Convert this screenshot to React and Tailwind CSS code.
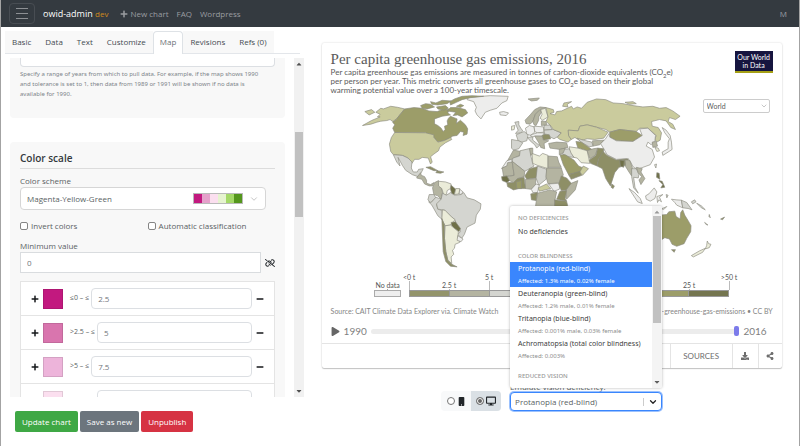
import React from "react";
import { FaPlus, FaMinus, FaDownload, FaShareAlt, FaDesktop, FaMobile, FaPlay, FaCaretUp, FaCaretDown } from "react-icons/fa";
import { FaLinkSlash } from "react-icons/fa6";
import { FiChevronDown } from "react-icons/fi";

const C = {
  none: "#ededec",
  grey: "#d4d5d0",
  stone: "#b4b4a1",
  moss: "#8e8f66",
  dark: "#6f7048",
  olive: "#9c9d69",
  light: "#cacb9d",
  pale: "#ebecd9",
};

const americas = [
  [C.none, "355,25 420,20 474,22 470,35 455,42 440,58 420,64 405,70 392,90 380,78 374,66 378,55 370,38 350,32"],
  [C.light, "162,60 140,55 120,52 98,60 90,58 75,70 88,76 80,84 88,84 62,95 35,110 60,106 78,100 90,97 108,95 118,92 134,104 128,96 136,92"],
  [C.light, "42,68 62,62 72,70 55,78"],
  [C.olive, "162,60 190,56 215,58 235,66 260,68 280,60 296,62 292,72 300,78 275,82 252,90 252,105 262,110 272,118 278,128 284,122 282,112 292,108 290,96 294,88 300,82 320,90 318,104 330,94 345,108 352,120 350,136 338,140 340,130 330,128 320,140 305,142 300,148 282,155 262,160 250,146 240,140 225,132 132,131 126,118 132,108 126,100 136,92"],
  [C.olive, "210,50 225,44 240,46 252,54 230,60 215,58"],
  [C.olive, "240,38 256,42 275,34 302,36 290,44 262,48 244,46"],
  [C.olive, "258,54 285,50 294,58 280,64 262,60"],
  [C.olive, "290,66 300,56 320,56 345,62 352,72 335,84 322,78 308,80 316,70"],
  [C.olive, "300,48 318,40 335,32 360,26 400,22 365,20 335,22 312,30 298,38"],
  [C.olive, "318,52 330,46 340,50 330,56"],
  [C.light, "132,131 225,132 250,138 250,146 262,160 282,155 300,146 304,152 285,162 268,175 264,186 250,196 240,204 245,220 240,226 233,208 215,206 205,212 192,212 184,224 172,208 155,200 128,198 120,188 116,166 122,146"],
  [C.grey, "128,198 155,200 172,208 184,220 182,238 188,250 200,250 204,242 218,240 212,252 202,264 185,258 165,245 155,230 142,206 148,232 138,220"],
  [C.stone, "202,262 210,252 212,260 222,264 228,275 228,284 240,288 250,282 246,292 236,292 222,286 214,272 198,268"],
  [C.moss, "226,236 240,234 262,246 250,246"],
  [C.moss, "260,246 280,250 270,254 256,252"],
  [C.stone, "264,276 252,282 246,298 250,318 262,322 272,332 276,312 274,300 264,292"],
  [C.pale, "264,278 285,280 302,286 300,300 290,306 288,318 280,320 274,300 264,292"],
  [C.dark, "302,290 316,302 312,318 304,316 300,302"],
  [C.pale, "316,300 328,300 326,316 312,318"],
  [C.none, "328,302 338,310 332,318 326,316"],
  [C.grey, "236,318 250,318 256,328 240,342 232,334"],
  [C.grey, "256,326 272,332 270,340 258,348 262,362 274,366 276,394 262,382 244,350 234,340 242,342"],
  [C.grey, "272,332 276,314 288,320 300,312 312,320 332,318 340,312 350,328 372,334 392,346 390,362 378,380 374,404 350,416 342,438 334,450 322,438 330,430 328,420 316,404 314,394 302,385 282,365 262,362 258,346"],
  [C.pale, "276,364 284,366 302,384 314,394 306,402 300,410 284,412 274,392"],
  [C.dark, "302,402 315,400 330,420 326,430 312,420 304,412"],
  [C.pale, "284,412 300,410 324,430 322,446 328,462 314,468 312,480 306,486 310,498 302,506 304,526 292,516 286,490 282,450"],
  [C.none, "322,442 338,452 332,460 320,456"],
  [C.moss, "274,390 282,410 282,450 286,490 292,516 304,528 320,536 300,534 286,520 278,490 276,440"],
  [C.none, "448,70 460,68 475,72 468,80 450,78"],
];

const oldWorld = [
  [C.stone, "75,94 90,78 104,62 120,54 138,56 120,62 106,76 98,98 90,106 78,104"],
  [C.stone, "98,98 106,76 120,62 124,70 116,84 116,94 108,110 102,108"],
  [C.pale, "122,62 136,58 144,84 128,94 120,88 126,76"],
  [C.grey, "44,100 56,98 56,108 62,118 68,126 62,132 46,134 54,124 50,114"],
  [C.pale, "34,112 44,110 42,122 34,124"],
  [C.grey, "48,138 62,132 72,128 84,138 80,156 64,160 54,156"],
  [C.grey, "34,152 56,156 68,162 56,180 40,184 34,178"],
  [C.none, "76,118 88,110 102,114 104,130 92,140 80,136"],
  [C.none, "102,112 130,114 132,130 112,132 104,128"],
  [C.stone, "124,96 138,98 140,108 124,110"],
  [C.grey, "132,110 150,108 156,122 132,124"],
  [C.grey, "132,124 160,122 184,132 172,144 162,150 150,144 134,138"],
  [C.none, "92,138 112,132 132,132 128,142 104,142 94,146"],
  [C.moss, "126,140 136,136 148,138 152,150 130,154"],
  [C.grey, "82,146 98,144 98,154 118,170 110,178 104,168 90,156"],
  [C.stone, "104,142 126,142 130,154 146,156 132,164 134,180 122,176 116,162"],
  [C.stone, "146,164 170,160 200,162 204,176 180,182 150,178"],
  [C.light, "138,56 160,62 162,70 150,74 165,78 170,68 185,66 215,52 220,60 232,54 245,58 262,40 290,30 318,32 340,42 370,44 400,50 430,54 460,52 480,58 500,56 520,66 542,82 528,92 510,86 506,98 520,106 528,122 514,116 500,96 480,92 456,98 458,112 476,116 486,132 482,154 472,160 466,152 470,140 445,118 420,118 410,128 360,122 330,130 318,122 290,115 262,108 240,112 235,126 205,124 206,140 214,152 204,160 180,152 172,146 184,132 160,122 150,108 138,98 144,84"],
  [C.light, "188,52 192,42 215,38 202,46 204,54"],
  [C.stone, "84,30 118,27 112,34 94,36"],
  [C.light, "376,40 400,38 410,44 390,46"],
  [C.light, "205,124 235,126 240,112 262,108 290,115 325,130 312,148 285,152 262,150 240,156 225,146 214,152 206,140"],
  [C.olive, "330,130 360,122 410,128 428,140 400,158 350,156 330,145"],
  [C.none, "328,134 330,145 350,156 400,158 428,140 420,120 445,118 468,140 466,156 455,168 445,160 440,172 458,182 465,205 452,228 430,236 412,242 400,234 392,218 380,210 350,212 322,198 312,180 302,164 316,152"],
  [C.grey, "232,148 250,154 276,160 280,172 268,174 244,160"],
  [C.olive, "228,158 244,160 276,182 262,186 234,178"],
  [C.stone, "278,156 312,154 300,168 280,172"],
  [C.pale, "208,174 234,178 262,186 268,214 270,224 244,222 232,208 222,206 210,190"],
  [C.grey, "190,182 208,180 214,194 222,206 204,204 188,196"],
  [C.stone, "178,182 196,178 190,192 178,198"],
  [C.stone, "262,186 280,180 294,178 286,200 270,210"],
  [C.moss, "268,214 288,200 294,178 312,180 310,196 296,212 292,232 272,224"],
  [C.moss, "310,188 322,200 350,214 368,212 386,210 378,230 358,236 345,252 336,280 332,292 318,270 308,240 292,232 296,212"],
  [C.dark, "360,214 374,216 372,236 362,232"],
  [C.moss, "336,286 344,292 340,300 334,296"],
  [C.olive, "180,198 196,198 222,214 236,232 250,238 242,250 206,258 190,228"],
  [C.moss, "206,258 240,248 246,260 214,272"],
  [C.light, "250,232 266,240 248,260 240,250"],
  [C.stone, "376,214 390,214 398,236 396,262 388,250 378,234"],
  [C.grey, "396,240 410,240 418,258 416,268 402,266 406,296 416,314 402,298 396,264"],
  [C.stone, "410,236 428,240 424,250 436,270 424,288 418,274 426,264 416,252"],
  [C.stone, "40,184 62,188 58,200 34,212 22,216"],
  [C.grey, "60,186 94,178 92,200 98,226 102,232 74,248 36,218 38,208 58,202"],
  [C.stone, "88,180 98,178 98,196 92,200"],
  [C.pale, "96,194 118,202 128,194 144,200 144,240 112,230 98,224"],
  [C.stone, "144,202 172,204 176,220 184,236 144,236"],
  [C.none, "20,216 34,212 36,220 20,232 4,240"],
  [C.stone, "6,238 20,232 22,222 36,220 42,260 10,264"],
  [C.stone, "36,218 74,248 72,264 52,270 40,282 28,276 20,264 42,260"],
  [C.moss, "74,262 88,240 112,234 114,250 108,268 80,272"],
  [C.grey, "112,232 140,242 138,272 116,290 108,268"],
  [C.stone, "140,238 184,238 190,258 180,282 144,286 138,264"],
  [C.stone, "76,272 108,270 106,290 92,302 76,300"],
  [C.dark, "4,264 20,262 28,276 20,282 6,276"],
  [C.moss, "20,282 40,282 52,270 72,266 76,300 56,300 40,304 22,294"],
  [C.olive, "48,280 64,276 64,300 50,300"],
  [C.none, "94,302 108,286 118,290 112,312 98,312"],
  [C.light, "114,298 140,286 152,300 118,308"],
  [C.none, "146,286 180,284 178,302 162,308"],
  [C.moss, "184,262 200,268 216,286 204,304 184,306 176,286"],
  [C.stone, "214,284 234,276 226,304 200,332 196,308"],
  [C.moss, "180,308 200,306 196,330 200,338 170,332"],
  [C.stone, "112,314 150,304 170,310 164,338 166,360 106,356"],
  [C.moss, "92,316 112,312 108,336 94,334"],
  [C.moss, "164,334 200,338 206,364 164,364"],
];

const oceania = [
  [C.none, "128,116 140,124 152,140 156,160 158,182 146,190 130,200 128,190 146,180 146,160 150,150 136,132"],
  [C.stone, "98,160 110,158 114,172 100,176"],
  [C.pale, "106,176 116,178 120,186 112,188"],
  [C.none, "105,228 111,226 109,238"],
  [C.dark, "112,252 119,254 121,272 111,266"],
  [C.dark, "118,276 128,278 136,296 124,298 130,288"],
  [C.none, "28,300 45,312 62,330 68,345 54,340"],
  [C.none, "78,322 88,316 104,298 112,310 106,330 92,338 80,332"],
  [C.none, "112,324 130,318 120,326 126,340 118,334 114,342"],
  [C.grey, "140,318 146,320 142,328"],
  [C.none, "156,332 170,334 186,335 190,358 172,350 166,342"],
  [C.grey, "186,335 202,342 218,364 206,360 190,358"],
  [C.grey, "216,340 226,334 230,340 220,346"],
  [C.grey, "232,344 246,352 258,364 246,358"],
  [C.stone, "270,378 273,388 269,384"],
  [C.moss, "304,392 316,386 310,394"],
  [C.grey, "256,402 266,410 260,408"],
  [C.none, "124,362 142,354 134,362"],
  [C.olive, "124,380 142,378 148,370 166,368 170,384 182,392 184,372 190,364 196,380 206,396 215,412 214,430 202,450 194,466 172,474 158,468 150,452 136,448 110,464 60,470 56,420 90,400"],
  [C.moss, "156,484 168,484 164,492"],
  [C.pale, "264,458 268,466 275,468 270,478 258,482 262,472"],
  [C.pale, "216,502 240,488 258,480 250,492 222,506"],
];

function Lands({ list }) {
  return list.map(([fill, points]) => <polygon key={points} points={points} fill={fill} />);
}

function WorldMap() {
  return (
    <svg viewBox="-60 18 1332 528" className="block w-full" role="img" aria-label="World map">
      <g stroke="#8b8b80" strokeWidth="2" strokeLinejoin="round">
        <Lands list={americas} />
        <g transform="translate(450 0)"><Lands list={oldWorld} /></g>
        <g transform="translate(810 0)"><Lands list={oceania} /></g>
      </g>
    </svg>
  );
}

const tabs = ["Basic", "Data", "Text", "Customize", "Map", "Revisions", "Refs (0)"];

const bins = [
  { id: "a", color: "bg-[#c2197f]", range: "≤0 – ≤", value: "2.5" },
  { id: "b", color: "bg-[#d975ae]", range: ">2.5 – ≤", value: "5" },
  { id: "c", color: "bg-[#edb4da]", range: ">5 – ≤", value: "7.5" },
  { id: "d", color: "bg-[#fbdfef]", range: ">7.5 – ≤", value: "10" },
];

const scheme = ["bg-[#c2197f]", "bg-[#e5a1cb]", "bg-[#fbdfef]", "bg-[#e6f4cf]", "bg-[#a4d867]", "bg-[#54961c]"];

const legend = ["bg-[#93946b]", "bg-[#b4b4a1]", "bg-[#d4d5d0]", "bg-[#ededec]", "bg-[#ebecd9]", "bg-[#cacb9d]", "bg-[#9c9d69]", "bg-[#74754f]"];
const ticks = ["<0 t", "2.5 t", "5 t", "7.5 t", "10 t", "15 t", "20 t", "25 t", ">50 t"];

const options = [
  { name: "Protanopia (red-blind)", note: "Affected: 1.3% male, 0.02% female", active: true },
  { name: "Deuteranopia (green-blind)", note: "Affected: 1.2% male, 0.01% female" },
  { name: "Tritanopia (blue-blind)", note: "Affected: 0.001% male, 0.03% female" },
  { name: "Achromatopsia (total color blindness)", note: "Affected: 0.003%" },
];

function Header() {
  return (
    <header className="flex h-[27px] shrink-0 items-center bg-[#343a40] pr-3 pl-2 text-[8px] text-[#9a9da0]">
      <button aria-label="Menu" className="flex h-[21px] w-[26px] flex-col items-center justify-center gap-1 rounded-sm border border-[#484d53]">
        <span className="h-px w-3 bg-[#8d9094]" />
        <span className="h-px w-3 bg-[#8d9094]" />
        <span className="h-px w-3 bg-[#8d9094]" />
      </button>
      <a href="#home" className="ml-2 text-[9px] font-medium text-white">owid-admin <span className="text-[8px] font-normal text-[#d18a1b]">dev</span></a>
      <nav className="ml-3 flex items-center gap-2">
        <a href="#new" className="flex items-center gap-0.5"><FaPlus />New chart</a>
        <a href="#faq">FAQ</a>
        <a href="#wp">Wordpress</a>
      </nav>
      <span className="ml-auto">M</span>
    </header>
  );
}

function Editor() {
  return (
    <section className="flex w-[38%] shrink-0 flex-col">
      <nav className="mt-1 mr-1 ml-1 flex h-[23px] shrink-0 border-b border-[#e3e6ea]">
        {tabs.map((t) =>
          t === "Map" ? (
            <a key={t} href="#map" aria-current="page" className="-mb-px flex items-center rounded-t-sm border border-b-0 border-[#dee2e6] bg-white px-1.5 pb-0.5 text-[#6b7178]">{t}</a>
          ) : (
            <a key={t} href={"#" + t} className="flex items-center bg-[#f8f8f8] px-[7px] text-[#454b51]">{t}</a>
          )
        )}
      </nav>
      <div className="mt-1 flex min-h-0 flex-1 pl-[9px]">
        <div className="min-w-0 flex-1 overflow-hidden">
          <div className="h-[60px] rounded-b bg-[#f8f8f8] px-[10px]">
            <input aria-label="Tolerance" className="block h-[9px] w-full rounded-b-sm border border-t-0 border-[#dcdfe3] bg-white" />
            <p className="mt-0.5 font-['Noto_Sans',sans-serif] text-[6px] leading-[10px] text-[#7d848a]">Specify a range of years from which to pull data. For example, if the map shows 1990<br />and tolerance is set to 1, then data from 1989 or 1991 will be shown if no data is<br />available for 1990.</p>
          </div>
          <div className="mt-6 rounded-t bg-[#f8f8f8] px-[10px] pt-2">
            <h2 className="border-b border-[#dcdcdc] pb-0.5 text-[10px] leading-4 font-semibold text-[#33383d]">Color scale</h2>
            <label htmlFor="scheme" className="mt-1.5 block leading-3">Color scheme</label>
            <div className="relative mr-[9px]">
              <select id="scheme" className="block h-[23px] w-full appearance-none rounded-sm border border-[#d6d6d6] bg-white pl-1.5">
                <option>Magenta-Yellow-Green</option>
              </select>
              <div className="pointer-events-none absolute inset-y-0 right-[7px] flex items-center gap-1.5">
                <span className="flex border border-[#b9b9b9]">
                  {scheme.map((c) => <span key={c} className={"h-[9px] w-2 " + c} />)}
                </span>
                <FiChevronDown className="size-[10px] text-[#bbb]" />
              </div>
            </div>
            <div className="mt-2 grid grid-cols-2 leading-4">
              <label className="flex items-center gap-[3px]"><input type="checkbox" className="size-2 appearance-none rounded-xs border border-[#858585] bg-white" />Invert colors</label>
              <label className="flex items-center gap-[3px]"><input type="checkbox" className="size-2 appearance-none rounded-xs border border-[#858585] bg-white" />Automatic classification</label>
            </div>
            <label htmlFor="min" className="mt-1.5 block leading-3">Minimum value</label>
            <div className="flex items-center gap-1">
              <input id="min" defaultValue="0" className="h-[21px] min-w-0 flex-1 border border-[#d9dcdf] bg-white px-1.5 text-[#6f757b]" />
              <button aria-label="Unlink"><FaLinkSlash className="size-[10px] text-[#212529]" /></button>
            </div>
            <ul className="mt-2 border border-[#e4e4e4] bg-white">
              {bins.map((b) => (
                <li key={b.id} className="flex h-[34px] items-center border-b border-[#e4e4e4] px-[10px]">
                  <button aria-label="Add bin"><FaPlus className="size-2 text-[#16181b]" /></button>
                  <button aria-label="Bin color" className={"ml-1 size-5 border border-black/10 " + b.color} />
                  <label htmlFor={b.id} className="ml-[7px] text-[7px]">{b.range}</label>
                  <input id={b.id} defaultValue={b.value} className="ml-0.5 h-[21px] min-w-0 flex-1 rounded-sm border border-[#dcdfe3] px-1.5 text-[#6f757b]" />
                  <button aria-label="Remove bin" className="ml-1"><FaMinus className="size-2 text-[#16181b]" /></button>
                </li>
              ))}
            </ul>
          </div>
        </div>
        <div className="ml-[9px] flex w-[10px] flex-col items-center bg-[#f1f1f1] text-[#505050]">
          <FaCaretUp className="mt-0.5 size-2" />
          <div className="mt-16 h-[85px] w-2 bg-[#c1c1c1]" />
          <FaCaretDown className="mt-auto mb-0.5 size-2" />
        </div>
      </div>
      <footer className="flex h-[49px] shrink-0 gap-0.5 pt-[14px] pl-[14px] text-white">
        <button className="h-[21px] rounded-xs bg-[#3fa845] px-[7px]">Update chart</button>
        <button className="h-[21px] rounded-xs bg-[#6c757d] px-[7px]">Save as new</button>
        <button className="h-[21px] rounded-xs bg-[#d63343] px-[7px]">Unpublish</button>
      </footer>
    </section>
  );
}

function Legend() {
  return (
    <div className="mt-0.5 flex items-end justify-center gap-2 text-[7px] leading-2 text-[#555]">
      <div className="flex w-[27px] flex-col items-center">
        <span className="whitespace-nowrap">No data</span>
        <span className="h-px w-px bg-[#aaa]" />
        <span className="h-[7px] w-full border border-[#aaa] bg-[#eee]" />
      </div>
      <div className="w-[320px]">
        <div className="-mx-5 flex h-[18px]">
          {ticks.map((t, i) => (
            <div key={t} className="flex w-10 flex-col items-center justify-end">
              <span>{t}</span>
              <span className={i % 2 ? "h-px w-px bg-[#bbb]" : "h-[9px] w-px bg-[#bbb]"} />
            </div>
          ))}
        </div>
        <div className="flex h-[7px] border border-[#999]">
          {legend.map((c) => <span key={c} className={"flex-1 border-r border-[#999] last:border-r-0 " + c} />)}
        </div>
      </div>
    </div>
  );
}

function Co2e() {
  return <>CO<span className="align-sub text-[6px] leading-[0]">2</span>e</>;
}

function Chart() {
  return (
    <article className="w-full max-w-[460px] rounded-xs bg-white font-[Lato,sans-serif] text-[#5b5b5b] shadow-[0_0_2px_rgba(0,0,0,0.18),0_1px_1px_rgba(0,0,0,0.2)]">
      <div className="px-[9px]">
        <div className="flex items-start justify-between pt-2">
          <div className="whitespace-nowrap">
            <h1 className="font-['Liberation_Serif',serif] text-[15px] leading-[17px]">Per capita greenhouse gas emissions, 2016</h1>
            <p className="text-[8px] leading-[9px]">
              Per capita greenhouse gas emissions are measured in tonnes of carbon-dioxide equivalents (<Co2e />)<br />per person per year. This metric converts all greenhouse gases to <Co2e /> based on their global<br />warming potential value over a 100-year timescale.
            </p>
          </div>
          <div className="flex h-[22px] w-[38px] flex-col justify-center border-b-2 border-[#a5a016] bg-[#16153f] text-center text-[7px] leading-[8px] text-white"><span>Our World</span><span>in Data</span></div>
        </div>
        <div className="relative">
          <WorldMap />
          <div className="absolute top-1 right-[3px] w-[67px]">
            <select aria-label="Region" className="block h-[14px] w-full appearance-none rounded-xs border border-[#ccc] bg-white pl-[3px] text-[7px]"><option>World</option></select>
            <FiChevronDown className="pointer-events-none absolute top-[3px] right-0.5 size-2 text-[#aaa]" />
          </div>
        </div>
        <Legend />
        <div className="mt-2.5 flex justify-between text-[7px] leading-2 text-[#858585]">
          <span>Source: CAIT Climate Data Explorer via. Climate Watch</span>
          <a href="#grapher">OurWorldInData.org/per-capita-greenhouse-gas-emissions • CC BY</a>
        </div>
        <div className="mt-2 mb-1 flex h-4 items-center pr-1.5 text-[10px] text-[#808080]">
          <button aria-label="Play"><FaPlay className="size-[9px] text-[#666]" /></button>
          <span className="ml-1">1990</span>
          <div className="mx-1 flex h-[5px] flex-1 items-center justify-end rounded-full bg-[#ececec]">
            <span className="h-[10px] w-[5px] rounded-xs bg-[#7c7bea]" />
          </div>
          <span>2016</span>
        </div>
      </div>
      <div className="flex h-[25px] justify-end border-t border-[#e4e4e4] text-[#6e6e6e]">
        <button className="w-[62px] border-l border-[#e4e4e4] text-[8px]">SOURCES</button>
        <button aria-label="Download" className="flex w-[26px] items-center justify-center border-l border-[#e4e4e4]"><FaDownload className="size-2" /></button>
        <button aria-label="Share" className="flex w-6 items-center justify-center border-l border-[#e4e4e4]"><FaShareAlt className="size-2" /></button>
      </div>
    </article>
  );
}

function Menu() {
  return (
    <div className="absolute bottom-full left-0 mb-1 flex h-[182px] w-full overflow-hidden rounded-xs bg-white font-['Noto_Sans',sans-serif] text-[7px] shadow-[0_0_3px_rgba(0,0,0,0.3)]">
      <div role="listbox" aria-label="Vision deficiencies" className="min-w-0 flex-1 overflow-hidden pt-2 text-[#404040]">
        <p className="px-2 text-[6px] leading-2 font-medium text-[#999]">NO DEFICIENCIES</p>
        <button role="option" aria-selected="false" className="mt-0.5 block h-4 px-2 leading-4">No deficiencies</button>
        <p className="mt-3 mb-0.5 px-2 text-[6px] leading-2 font-medium text-[#999]">COLOR BLINDNESS</p>
        {options.map((o) => (
          <button key={o.name} role="option" aria-selected={!!o.active} className={o.active ? "block h-[25px] w-full bg-[#3a86fd] px-2 text-left whitespace-nowrap text-white" : "block h-[25px] w-full px-2 text-left whitespace-nowrap"}>
            <span className="block leading-3">{o.name}</span>
            <span className={o.active ? "block text-[6px] leading-3" : "block text-[6px] leading-3 text-[#8c8c8c]"}>{o.note}</span>
          </button>
        ))}
        <p className="mt-2.5 px-2 text-[6px] leading-2 font-medium text-[#999]">REDUCED VISION</p>
      </div>
      <div className="flex w-[10px] flex-col items-center bg-[#f4f4f4] text-[#606060]">
        <FaCaretUp className="mt-0.5 size-2 text-[#999]" />
        <div className="h-[107px] w-2 bg-[#c1c1c1]" />
        <FaCaretDown className="mt-auto mb-0.5 size-2" />
      </div>
    </div>
  );
}

const radio = "size-2 appearance-none rounded-full border border-[#777] bg-white checked:bg-[#666] checked:shadow-[inset_0_0_0_1px_white]";

function Preview() {
  return (
    <section className="flex min-w-0 flex-1 flex-col items-center px-4 pt-4">
      <Chart />
      <div className="mt-[14px] flex items-end gap-[9px]">
        <div className="flex h-5 overflow-hidden rounded-sm bg-[#f8f9fa] text-[#212529]">
          <label className="flex w-[30px] items-center justify-center gap-0.5"><input type="radio" name="device" aria-label="Mobile" className={radio} /><FaMobile className="size-[9px]" /></label>
          <label className="flex w-[30px] items-center justify-center gap-0.5 bg-[#dae0e5]"><input type="radio" name="device" aria-label="Desktop" defaultChecked className={radio} /><FaDesktop className="size-[10px]" /></label>
        </div>
        <div className="w-[152px]">
          <label htmlFor="vision" className="block h-[10px] leading-[10px]">Emulate vision deficiency:</label>
          <div className="relative">
            <select id="vision" className="block h-[19px] w-full appearance-none rounded-sm border border-[#3a86fd] bg-white pl-1 ring-1 ring-[#3a86fd]/50">
              <option>Protanopia (red-blind)</option>
            </select>
            <div className="pointer-events-none absolute inset-y-0 right-1 flex items-center gap-1">
              <span className="h-2 w-px bg-[#ccc]" />
              <FiChevronDown className="size-[10px] stroke-[3] text-[#222]" />
            </div>
            <Menu />
          </div>
        </div>
      </div>
    </section>
  );
}

export default function App() {
  return (
    <div className="flex h-screen flex-col overflow-hidden border-r border-l border-[#a3a3a3] bg-white font-['Open_Sans','Noto_Sans',sans-serif] text-[8px] text-[#5a5f64]">
      <Header />
      <main className="flex min-h-0 flex-1">
        <Editor />
        <Preview />
      </main>
    </div>
  );
}
